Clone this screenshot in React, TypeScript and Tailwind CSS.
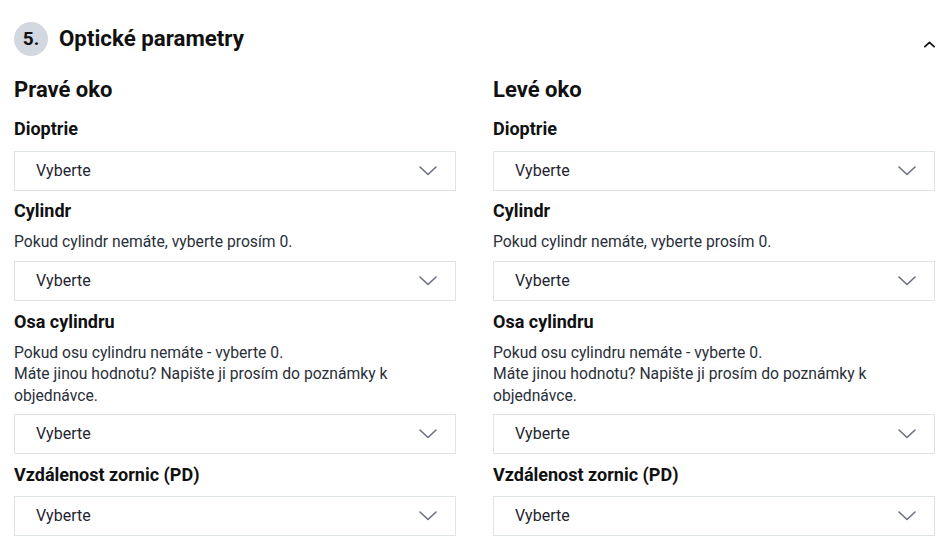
type Field = {
  label: string;
  help?: string[];
};

const fields: Field[] = [
  { label: 'Dioptrie' },
  { label: 'Cylindr', help: ['Pokud cylindr nemáte, vyberte prosím 0.'] },
  {
    label: 'Osa cylindru',
    help: ['Pokud osu cylindru nemáte - vyberte 0.', 'Máte jinou hodnotu? Napište ji prosím do poznámky k objednávce.'],
  },
  { label: 'Vzdálenost zornic (PD)' },
];

function Chevron({ up = false, className = '' }: { up?: boolean; className?: string }) {
  return (
    <svg width="18" height="10" viewBox="0 0 18 10" fill="none" className={className}>
      <path
        d={up ? 'M1.5 8.5 L9 1.5 L16.5 8.5' : 'M1 1 L9 8.5 L17 1'}
        stroke="currentColor"
        strokeWidth={up ? 2.8 : 1.6}
        strokeLinecap="round"
        strokeLinejoin="round"
      />
    </svg>
  );
}

function SelectBox() {
  return (
    <div className="h-10 border border-[#dfe3ea] bg-white flex items-center justify-between pl-[21px] pr-[18px]">
      <span className="text-[16px] text-[#1f2430]">Vyberte</span>
      <Chevron className="text-[#6b7080]" />
    </div>
  );
}

function EyeColumn({ title }: { title: string }) {
  return (
    <div className="flex flex-col">
      <h3 className="text-[22px] leading-[28px] font-bold text-[#111] mb-[13px]">{title}</h3>
      {fields.map((f, i) => (
        <div key={f.label} className={i === 0 ? '' : i === 1 ? 'mt-[8px]' : 'mt-[9px]'}>
          <div className="text-[18px] leading-[24px] font-bold text-[#111]">{f.label}</div>
          {f.help ? (
            <div className="mt-[8px] mb-[8px] text-[15.7px] leading-[21.5px] text-[#2a2f3a] pr-12">
              {f.help.map((h) => (
                <div key={h}>{h}</div>
              ))}
            </div>
          ) : (
            <div className={i === 0 ? 'h-[10px]' : 'h-[9px]'} />
          )}
          <SelectBox />
        </div>
      ))}
    </div>
  );
}

export default function App() {
  return (
    <div className="w-[945px] h-[542px] bg-white overflow-hidden pl-[14px] pr-[10px] pt-[22px]" style={{ fontFamily: 'Roboto, "Liberation Sans", sans-serif' }}>
      {/* Section header */}
      <div className="flex items-center justify-between h-[34px]">
        <div className="flex items-center gap-[11px]">
          <div className="w-[34px] h-[34px] rounded-full bg-[#d3d7e0] flex items-center justify-center text-[19px] font-bold text-[#111]">
            5.
          </div>
          <h2 className="text-[22.3px] font-bold text-[#111]">Optické parametry</h2>
        </div>
        <Chevron up className="w-[11px] h-[7px] text-[#111] mt-[10px]" />
      </div>

      <div className="grid grid-cols-2 gap-[37px] mt-[20px]">
        <EyeColumn title="Pravé oko" />
        <EyeColumn title="Levé oko" />
      </div>
    </div>
  );
}
